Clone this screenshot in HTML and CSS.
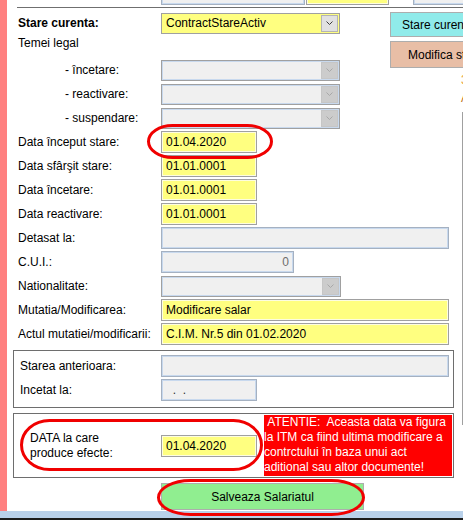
FILE: index.html
```html
<!DOCTYPE html>
<html lang="ro">
<head>
    <meta charset="UTF-8">
    <title>Salariat - stare contract</title>
    <link rel="stylesheet" href="styles.css">
</head>
<body>
    <div class="screen">
        <div class="side"></div>
        <div class="form">
            <!-- randul de deasupra, taiat de fereastra -->
            <div class="top-row">
                <input class="box off w-top1" disabled>
                <input class="box yellow w-top2" readonly>
                <input class="box off w-top3" disabled>
            </div>
            <div class="sep"></div>

            <div class="head">
                <div class="head-rows">
                    <div class="row">
                        <label class="lbl bold">Stare curenta:</label>
                        <div class="combo yellow">
                            <span class="val">ContractStareActiv</span>
                            <span class="drop"><svg width="7" height="4" viewBox="0 0 7 4"><polyline points="0.5,0.5 3.5,3.5 6.5,0.5" /></svg></span>
                        </div>
                    </div>
                    <div class="legal">Temei legal</div>
                    <div class="row">
                        <label class="lbl sub">- încetare:</label>
                        <div class="combo off">
                            <span class="val"></span>
                            <span class="drop"><svg width="7" height="4" viewBox="0 0 7 4"><polyline points="0.5,0.5 3.5,3.5 6.5,0.5" /></svg></span>
                        </div>
                    </div>
                    <div class="row">
                        <label class="lbl sub">- reactivare:</label>
                        <div class="combo off">
                            <span class="val"></span>
                            <span class="drop"><svg width="7" height="4" viewBox="0 0 7 4"><polyline points="0.5,0.5 3.5,3.5 6.5,0.5" /></svg></span>
                        </div>
                    </div>
                    <div class="row">
                        <label class="lbl sub">- suspendare:</label>
                        <div class="combo off">
                            <span class="val"></span>
                            <span class="drop"><svg width="7" height="4" viewBox="0 0 7 4"><polyline points="0.5,0.5 3.5,3.5 6.5,0.5" /></svg></span>
                        </div>
                    </div>
                </div>
                <div class="actions">
                    <button class="btn cyan">Stare curenta</button>
                    <button class="btn salmon">Modifica stare</button>
                </div>
            </div>

            <div class="row">
                <label class="lbl">Data început stare:</label>
                <input class="box yellow w-date" value="01.04.2020" readonly>
            </div>
            <div class="row">
                <label class="lbl">Data sfârşit stare:</label>
                <input class="box yellow w-date" value="01.01.0001" readonly>
            </div>
            <div class="row">
                <label class="lbl">Data încetare:</label>
                <input class="box yellow w-date" value="01.01.0001" readonly>
            </div>
            <div class="row">
                <label class="lbl">Data reactivare:</label>
                <input class="box yellow w-date" value="01.01.0001" readonly>
            </div>
            <div class="row">
                <label class="lbl">Detasat la:</label>
                <input class="box off w-wide" disabled>
            </div>
            <div class="row">
                <label class="lbl">C.U.I.:</label>
                <input class="box off w-cui" value="0" disabled>
            </div>
            <div class="row">
                <label class="lbl">Nationalitate:</label>
                <div class="combo off">
                    <span class="val"></span>
                    <span class="drop"><svg width="7" height="4" viewBox="0 0 7 4"><polyline points="0.5,0.5 3.5,3.5 6.5,0.5" /></svg></span>
                </div>
            </div>
            <div class="row">
                <label class="lbl">Mutatia/Modificarea:</label>
                <input class="box yellow w-wide" value="Modificare salar" readonly>
            </div>
            <div class="row">
                <label class="lbl">Actul mutatiei/modificarii:</label>
                <input class="box yellow w-wide" value="C.I.M. Nr.5 din 01.02.2020" readonly>
            </div>

            <div class="group g1">
                <div class="row">
                    <label class="lbl">Starea anterioara:</label>
                    <input class="box off w-wide" disabled>
                </div>
                <div class="row">
                    <label class="lbl">Incetat la:</label>
                    <input class="box off w-date dots" value="  .  ." disabled>
                </div>
            </div>

            <div class="group g2">
                <label class="lbl2">DATA la care<br>produce efecte:</label>
                <input class="box yellow w-date" value="01.04.2020" readonly>
                <div class="alert">&nbsp;ATENTIE:&nbsp; Aceasta data va figura<br>la ITM ca fiind ultima modificare a<br>contrctului în baza unui act<br>aditional sau altor documente!</div>
            </div>

            <div class="save-row">
                <button class="btn green">Salveaza Salariatul</button>
            </div>
        </div>
        <div class="edge">
            <span class="mark1">3</span>
            <span class="mark2">A</span>
            <div class="edge-line"></div>
        </div>
    </div>
    <div class="taskbar"></div>

    <!-- adnotari peste captura -->
    <svg class="marks" width="463" height="521" viewBox="0 0 463 521">
        <rect x="148.5" y="125.5" width="123" height="32" rx="24" ry="16" />
        <rect x="21.5" y="420.5" width="240" height="49" rx="28" ry="24.5" />
        <rect x="158.5" y="480.5" width="205" height="34" rx="32" ry="17" />
    </svg>
</body>
</html>
```

FILE: styles.css
```css
html {
    background: #fff;
}
body {
    margin: 0;
    width: 463px;
    height: 521px;
    overflow: hidden;
    position: relative;
    background: #fff;
    font-family: "Liberation Sans", Arial, sans-serif;
    font-size: 12px;
    color: #000;
}
.screen {
    display: flex;
    height: 511px;
}
.side {
    width: 7px;
    flex: none;
    background: #ff8080;
}
.form {
    width: 441px;
    flex: none;
    margin-left: 6px;
}
.edge {
    flex: 1;
    padding-left: 7px;
    white-space: nowrap;
}

/* casete */
.box {
    box-sizing: border-box;
    height: 22px;
    margin: 0;
    padding: 0 4px;
    font: inherit;
    color: #000;
    border: 1px solid #a0a0a0;
    outline: none;
}
.yellow {
    background: #ffff80;
}
input.yellow {
    box-shadow: inset 0 0 0 1px #fdfde0;
}
.off {
    background: #f0f0f0;
    border-color: #a5b1c1;
    box-shadow: inset 0 0 0 1px #c8d9ee;
}
.w-date { width: 96px; }
.w-wide { width: 288px; }
.w-cui {
    width: 133px;
    text-align: right;
    padding-right: 4px;
    color: #6d6d6d;
}
.dots {
    color: #333;
}

.top-row {
    display: flex;
    margin-top: -17px;
    padding-left: 148px;
}
.w-top1 { width: 144px; }
.w-top2 { width: 83px; margin-left: 1px; }
.w-top3 { width: 80px; margin-left: 24px; }
.sep {
    height: 1px;
    background: #6f6f6f;
    margin: 2px -9px 0 4px;
}

.head {
    display: flex;
    margin-top: 3px;
}
.head-rows {
    width: 327px;
    flex: none;
}
.actions {
    margin-left: 50px;
    display: flex;
    flex-direction: column;
    align-items: flex-start;
}

.row {
    display: flex;
    align-items: center;
    height: 24px;
    padding-left: 5px;
}
.lbl {
    width: 143px;
    flex: none;
    white-space: nowrap;
    box-sizing: border-box;
}
.lbl.sub {
    padding-left: 47px;
}
.bold {
    font-weight: bold;
}
.legal {
    height: 16px;
    line-height: 16px;
    margin-bottom: 7px;
    padding-left: 5px;
}

/* combobox */
.combo {
    display: flex;
    box-sizing: border-box;
    width: 180px;
    height: 21px;
    padding: 1px;
    border: 1px solid #a0a0a0;
}
.combo .val {
    flex: 1;
    padding-left: 3px;
    line-height: 17px;
    white-space: nowrap;
    overflow: hidden;
}
.drop {
    width: 17px;
    box-sizing: border-box;
    display: flex;
    align-items: center;
    justify-content: center;
    background: #e1e1e1;
    border: 1px solid #b4b4b4;
}
.drop polyline {
    fill: none;
    stroke: #3c3c3c;
    stroke-width: 1;
}
.combo.off .drop {
    background: #cccccc;
    border-color: #c6c6c6;
}
.combo.off .drop polyline {
    stroke: #a8a8a8;
}

/* butoane */
.btn {
    box-sizing: border-box;
    padding: 0;
    font: inherit;
    color: #000;
    border: 1px solid #adadad;
    text-align: left;
    white-space: nowrap;
}
.cyan {
    width: 140px;
    height: 25px;
    margin-top: 1px;
    padding-left: 11px;
    background: #90ebea;
}
.salmon {
    width: 140px;
    height: 27px;
    margin-top: 4px;
    padding-left: 17px;
    background: #e8bea6;
}
.green {
    width: 203px;
    height: 27px;
    text-align: center;
    background: #90ee90;
}
.save-row {
    margin-top: 5px;
    padding-left: 148px;
}

/* grupuri */
.group {
    box-sizing: border-box;
    width: 441px;
    border: 1px solid #6e6e6e;
}
.g1 {
    margin-top: 4px;
    padding: 3px 0 5px 6px;
}
.g1 .row {
    padding-left: 0;
}
.g1 .lbl {
    width: 141px;
}
.g2 {
    margin-top: 5px;
    padding: 1px 1px 1px 16px;
    display: flex;
    align-items: center;
}
.lbl2 {
    width: 131px;
    flex: none;
    line-height: 15px;
}
.alert {
    width: 188px;
    height: 61px;
    margin-left: 7px;
    background: #ff0000;
    color: #fff;
    line-height: 15px;
    white-space: nowrap;
    overflow: hidden;
}

/* marginea dreapta */
.mark1, .mark2 {
    display: block;
    line-height: 14px;
}
.mark1 {
    margin-top: 73px;
    color: #e8a030;
}
.mark2 {
    margin-top: 4px;
    color: #c07020;
}
.edge-line {
    margin: 7px 0 0 1px;
    height: 313px;
    border-left: 1px solid #a0a0a0;
}

.taskbar {
    height: 7px;
    background: #b9d1ea;
    border-bottom: 2px solid #1c1c1c;
}

.marks {
    position: absolute;
    top: 0;
    left: 0;
    pointer-events: none;
}
.marks rect {
    fill: none;
    stroke: #f00000;
    stroke-width: 3;
}
```
